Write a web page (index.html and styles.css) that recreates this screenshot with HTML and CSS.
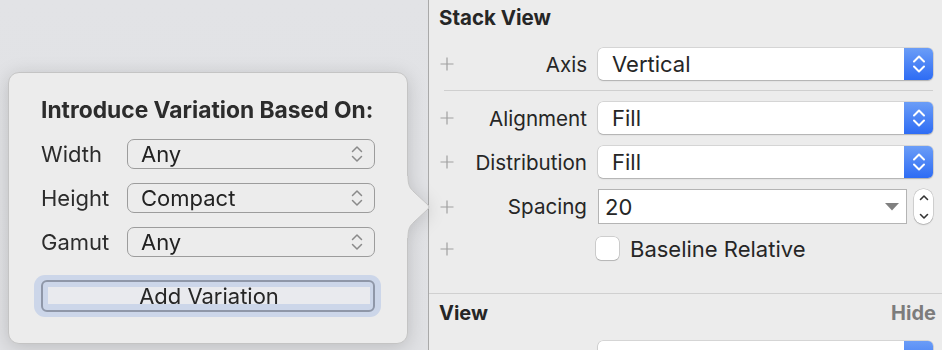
FILE: index.html
```html
<!DOCTYPE html>
<html>
<head>
<meta charset="utf-8">
<link rel="stylesheet" href="styles.css">
</head>
<body>
<div class="app">
  <div class="canvas">
    <div class="popover">
      <div class="pop-title">Introduce Variation Based On:</div>
      <div class="pop-grid">
        <span class="pop-label">Width</span>
        <div class="pop-select"><span>Any</span><svg class="updown" viewBox="0 0 12 18" width="12" height="18"><path d="M1.5 6.5 L6 2 L10.5 6.5 M1.5 11.5 L6 16 L10.5 11.5"/></svg></div>
        <span class="pop-label">Height</span>
        <div class="pop-select"><span>Compact</span><svg class="updown" viewBox="0 0 12 18" width="12" height="18"><path d="M1.5 6.5 L6 2 L10.5 6.5 M1.5 11.5 L6 16 L10.5 11.5"/></svg></div>
        <span class="pop-label">Gamut</span>
        <div class="pop-select"><span>Any</span><svg class="updown" viewBox="0 0 12 18" width="12" height="18"><path d="M1.5 6.5 L6 2 L10.5 6.5 M1.5 11.5 L6 16 L10.5 11.5"/></svg></div>
      </div>
      <div class="add-ring"><div class="add-btn"><div class="add-face">Add Variation</div></div></div>
      <svg class="pop-arrow" viewBox="0 0 26 62" width="26" height="62">
        <path class="arrow-fill" d="M0 0 L2 0 C2 10 4 12 8 16 L22 29 Q24 31 22 33 L8 46 C4 50 2 52 2 62 L0 62 Z"/>
        <path class="arrow-line" d="M2 0 C2 10 4 12 8 16 L22 29 Q24 31 22 33 L8 46 C4 50 2 52 2 62"/>
      </svg>
    </div>
  </div>
  <div class="inspector">
    <div class="sec-title">Stack View</div>
    <div class="row row-axis">
      <svg class="plus" viewBox="0 0 14 14" width="14" height="14"><path d="M7 0.5 V13.5 M0.5 7 H13.5"/></svg>
      <span class="label">Axis</span>
      <div class="popup"><span class="popup-text">Vertical</span><span class="popup-arrows"><svg viewBox="0 0 14 20" width="14" height="20"><path d="M2 7.5 L7 2.5 L12 7.5 M2 12.5 L7 17.5 L12 12.5"/></svg></span></div>
    </div>
    <div class="rule"></div>
    <div class="row">
      <svg class="plus" viewBox="0 0 14 14" width="14" height="14"><path d="M7 0.5 V13.5 M0.5 7 H13.5"/></svg>
      <span class="label">Alignment</span>
      <div class="popup"><span class="popup-text">Fill</span><span class="popup-arrows"><svg viewBox="0 0 14 20" width="14" height="20"><path d="M2 7.5 L7 2.5 L12 7.5 M2 12.5 L7 17.5 L12 12.5"/></svg></span></div>
    </div>
    <div class="row row-gap">
      <svg class="plus" viewBox="0 0 14 14" width="14" height="14"><path d="M7 0.5 V13.5 M0.5 7 H13.5"/></svg>
      <span class="label">Distribution</span>
      <div class="popup"><span class="popup-text">Fill</span><span class="popup-arrows"><svg viewBox="0 0 14 20" width="14" height="20"><path d="M2 7.5 L7 2.5 L12 7.5 M2 12.5 L7 17.5 L12 12.5"/></svg></span></div>
    </div>
    <div class="row row-spacing">
      <svg class="plus" viewBox="0 0 14 14" width="14" height="14"><path d="M7 0.5 V13.5 M0.5 7 H13.5"/></svg>
      <span class="label">Spacing</span>
      <div class="combo">
        <div class="field"><span>20</span><svg class="tri" viewBox="0 0 14 8" width="14" height="8"><path d="M0 0 H14 L7 7.5 Z"/></svg></div>
        <div class="stepper"><svg viewBox="0 0 10 30" width="10" height="30"><path d="M1.5 7.5 L5 4 L8.5 7.5 M1.5 22.5 L5 26 L8.5 22.5"/></svg></div>
      </div>
    </div>
    <div class="row row-check">
      <svg class="plus" viewBox="0 0 14 14" width="14" height="14"><path d="M7 0.5 V13.5 M0.5 7 H13.5"/></svg>
      <span class="label"></span>
      <label class="check"><span class="box"></span><span>Baseline Relative</span></label>
    </div>
    <div class="rule-full"></div>
    <div class="sec-head">
      <span class="sec-title2">View</span>
      <span class="hide">Hide</span>
    </div>
    <div class="row row-last">
      <span></span>
      <span class="label"></span>
      <div class="popup"><span class="popup-text"></span><span class="popup-arrows"></span></div>
    </div>
  </div>
</div>
</body>
</html>
```
FILE: styles.css
```css
* { box-sizing: border-box; }
html, body { margin: 0; padding: 0; }
body {
  width: 942px;
  height: 350px;
  overflow: hidden;
  font-family: Inter, "Liberation Sans", sans-serif;
  color: #262626;
}
.app {
  display: flex;
  height: 350px;
  overflow: hidden;
}
.canvas {
  width: 429px;
  flex: none;
  background: linear-gradient(#e2e3e6, #e0e1e4);
  border-right: 1px solid #a9a9a9;
  padding: 72px 0 0 8px;
}
.popover {
  position: relative;
  width: 400px;
  height: 272px;
  background: #ececec;
  border: 1px solid #c4c4c4;
  border-radius: 11px;
  padding: 26px 32px 0 32px;
  filter: drop-shadow(0 3px 9px rgba(0,0,0,0.16));
}
.pop-title {
  font-size: 22.8px;
  font-weight: 700;
  line-height: 22px;
  color: #2c2c2c;
  white-space: nowrap;
}
.pop-grid {
  margin-top: 18px;
  display: grid;
  grid-template-columns: 86px 248px;
  grid-auto-rows: 30px;
  row-gap: 14px;
  align-items: center;
}
.pop-label {
  font-size: 22px;
  color: #2c2c2c;
}
.pop-select {
  height: 30px;
  border: 1.5px solid #9c9c9c;
  border-radius: 7px;
  display: flex;
  align-items: center;
  justify-content: space-between;
  padding: 0 11px 0 13px;
  font-size: 22px;
  color: #222;
}
.updown {
  fill: none;
  stroke: #8a8a8a;
  stroke-width: 1.5;
  stroke-linecap: round;
  stroke-linejoin: round;
}
.add-ring {
  margin: 18px -6px 0 -7px;
  padding: 5px 6px 5px 7px;
  background: #ccd6e9;
  border-radius: 11px;
}
.add-btn {
  height: 32px;
  border: 2px solid #8f97a8;
  border-radius: 6px;
  padding: 5px 3px 6px 5px;
  background: #ccd6e9;
}
.add-face {
  height: 17px;
  background: #e9eaee;
  font-size: 22px;
  line-height: 19px;
  text-align: center;
  color: #262626;
  white-space: nowrap;
}
.pop-arrow {
  position: absolute;
  left: 397px;
  top: 103px;
  overflow: visible;
}
.arrow-fill { fill: #ececec; }
.arrow-line { fill: none; stroke: #c4c4c4; stroke-width: 1; }

/* inspector */
.inspector {
  flex: 1;
  background: #ececec;
  padding: 7px 9px 0 10px;
  overflow: hidden;
}
.sec-title {
  font-size: 20.5px;
  font-weight: 700;
  line-height: 22px;
  color: #262626;
}
.row {
  display: grid;
  grid-template-columns: 15px 144px 335px;
  align-items: center;
  height: 32px;
}
.row > .label { text-align: right; padding-right: 11px; font-size: 20.6px; color: #262626; white-space: nowrap; }
.row-axis { margin-top: 19px; }
.row-gap { margin-top: 12px; }
.row-spacing { margin-top: 11px; height: 35px; }
.row-check { margin-top: 13px; height: 22px; }
.row-last { margin-top: 17px; }
.plus {
  fill: none;
  stroke: #a0a0a0;
  stroke-width: 1.2;
  margin-left: 1px;
}
.rule {
  height: 1px;
  background: #cfcfcf;
  margin: 10px 0 11px 5px;
}
.popup {
  height: 32px;
  background: #fff;
  border-radius: 5px;
  box-shadow: 0 0 0 0.5px rgba(0,0,0,0.18), 0 1px 1.5px rgba(0,0,0,0.18);
  display: flex;
  overflow: hidden;
}
.popup-text {
  flex: 1;
  padding-left: 14px;
  font-size: 22px;
  line-height: 32px;
  color: #262626;
}
.popup-arrows {
  width: 29px;
  background: linear-gradient(#6b9df7, #2e6cf4);
  display: flex;
  align-items: center;
  justify-content: center;
}
.popup-arrows svg {
  fill: none;
  stroke: #fff;
  stroke-width: 2;
  stroke-linecap: round;
  stroke-linejoin: round;
}
.combo {
  display: flex;
  align-items: center;
  justify-content: space-between;
  height: 35px;
}
.field {
  width: 309px;
  height: 35px;
  background: #fff;
  border: 1px solid #b4b4b4;
  display: flex;
  align-items: center;
  justify-content: space-between;
  padding: 0 7px 0 6px;
  font-size: 22px;
  color: #262626;
}
.tri { fill: #808080; }
.stepper {
  width: 19px;
  height: 35px;
  background: #fff;
  border-radius: 9px;
  box-shadow: 0 0 0 0.5px rgba(0,0,0,0.2), 0 1px 1.5px rgba(0,0,0,0.15);
  display: flex;
  align-items: center;
  justify-content: center;
}
.stepper svg {
  fill: none;
  stroke: #333;
  stroke-width: 1.6;
  stroke-linecap: round;
  stroke-linejoin: round;
}
.check {
  display: flex;
  align-items: center;
  gap: 11px;
  font-size: 22px;
  line-height: 22px;
  color: #262626;
  margin-left: -2px;
}
.box {
  width: 23px;
  height: 23px;
  background: #fff;
  border-radius: 5px;
  box-shadow: 0 0 0 0.5px rgba(0,0,0,0.25), 0 1px 1px rgba(0,0,0,0.12);
}
.rule-full {
  height: 1px;
  background: #d0d0d0;
  margin: 34px -9px 0 -10px;
}
.sec-head {
  display: flex;
  justify-content: space-between;
  align-items: center;
  margin-top: 8px;
  height: 22px;
  margin-right: -3px;
}
.sec-title2 {
  font-size: 20px;
  font-weight: 700;
  color: #262626;
}
.hide {
  font-size: 20px;
  font-weight: 700;
  color: #7c7c7c;
}
```
